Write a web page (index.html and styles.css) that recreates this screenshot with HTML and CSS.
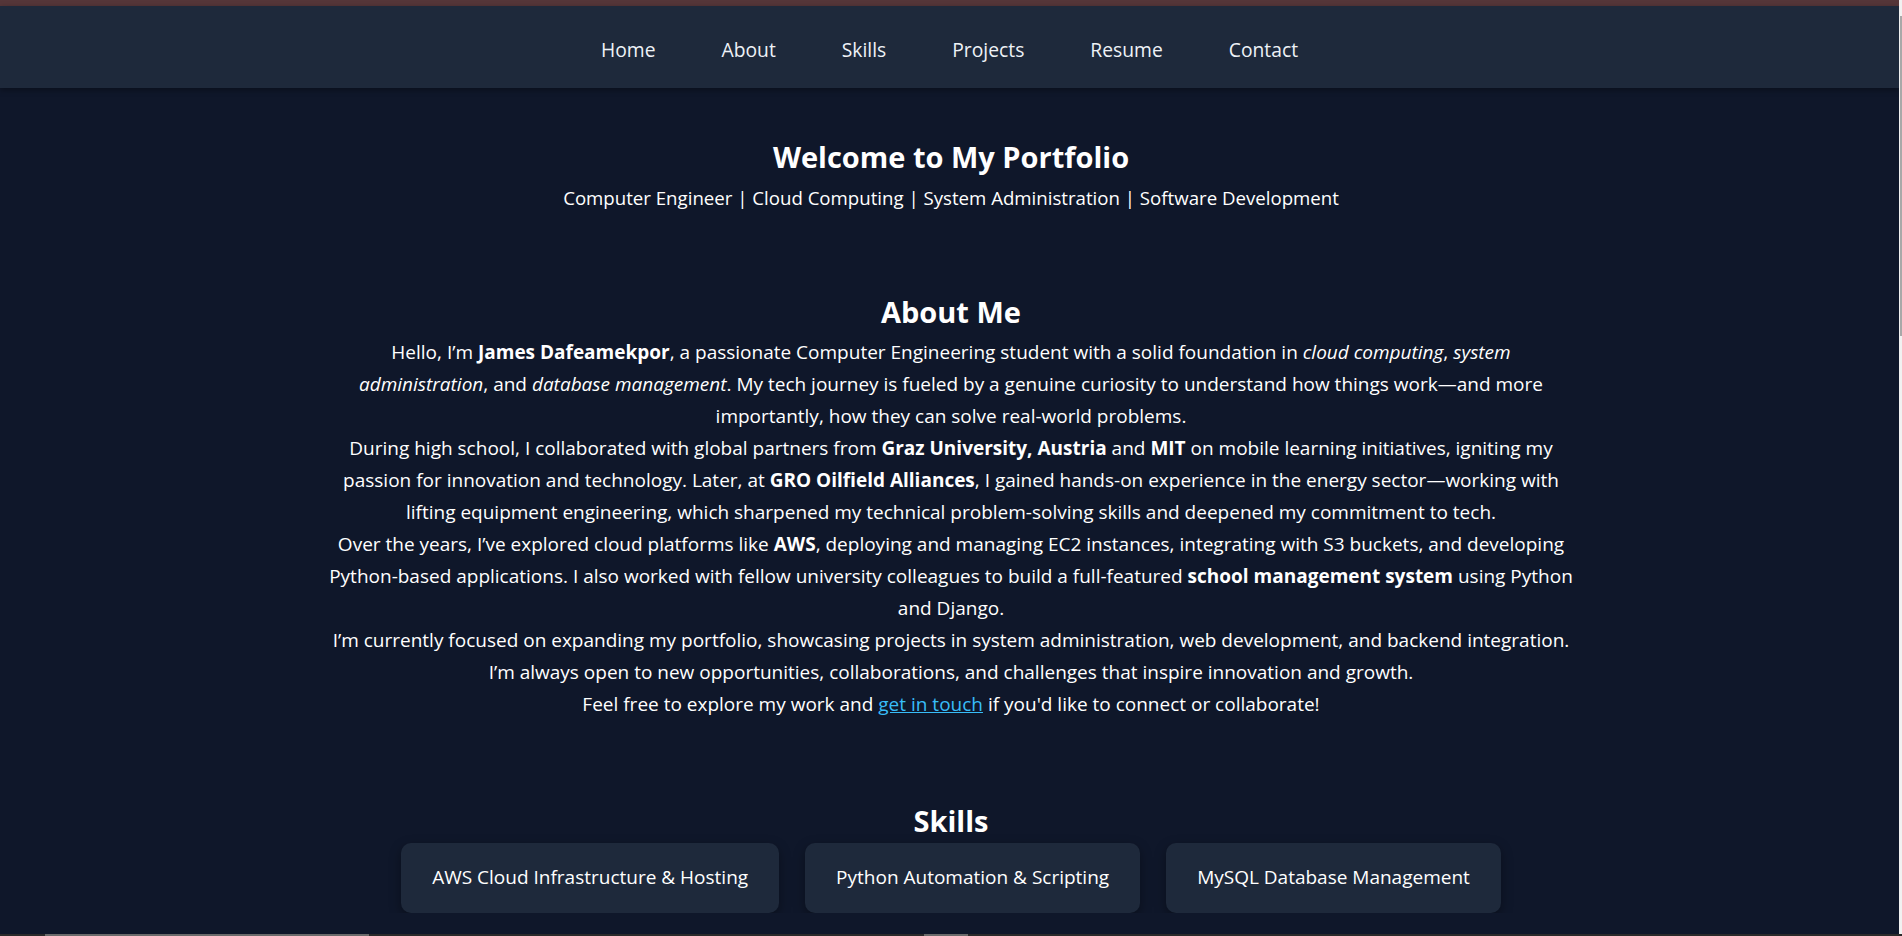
FILE: index.html
```html
<!DOCTYPE html>
<html lang="en">
<head>
<meta charset="utf-8">
<title>James Dafeamekpor | Portfolio</title>
<link rel="stylesheet" href="styles.css">
</head>
<body>
<div class="top-strip"></div>
<nav class="navbar">
  <a href="#home" class="nav-link">Home</a>
  <a href="#about" class="nav-link">About</a>
  <a href="#skills" class="nav-link">Skills</a>
  <a href="#projects" class="nav-link">Projects</a>
  <a href="#resume" class="nav-link">Resume</a>
  <a href="#contact" class="nav-link">Contact</a>
</nav>
<main>
  <header class="hero" id="home">
    <h1 class="hero-title">Welcome to My Portfolio</h1>
    <p class="hero-sub">Computer Engineer | Cloud Computing | System Administration | Software Development</p>
  </header>
  <section class="about" id="about">
    <h2 class="section-title">About Me</h2>
    <div class="about-text">
      <p>Hello, I’m <strong>James Dafeamekpor</strong>, a passionate Computer Engineering student with a solid foundation in <em>cloud computing</em>, <em>system administration</em>, and <em>database management</em>. My tech journey is fueled by a genuine curiosity to understand how things work—and more importantly, how they can solve real-world problems.</p>
      <p>During high school, I collaborated with global partners from <strong>Graz University, Austria</strong> and <strong>MIT</strong> on mobile learning initiatives, igniting my passion for innovation and technology. Later, at <strong>GRO Oilfield Alliances</strong>, I gained hands-on experience in the energy sector—working with lifting equipment engineering, which sharpened my technical problem-solving skills and deepened my commitment to tech.</p>
      <p>Over the years, I’ve explored cloud platforms like <strong>AWS</strong>, deploying and managing EC2 instances, integrating with S3 buckets, and developing Python-based applications. I also worked with fellow university colleagues to build a full-featured <strong>school management system</strong> using Python and Django.</p>
      <p>I’m currently focused on expanding my portfolio, showcasing projects in system administration, web development, and backend integration. I’m always open to new opportunities, collaborations, and challenges that inspire innovation and growth.</p>
      <p>Feel free to explore my work and <a href="#contact" class="inline-link">get in touch</a> if you'd like to connect or collaborate!</p>
    </div>
  </section>
  <section class="skills" id="skills">
    <h2 class="section-title">Skills</h2>
    <div class="skill-list">
      <div class="skill-card">AWS Cloud Infrastructure &amp; Hosting</div>
      <div class="skill-card">Python Automation &amp; Scripting</div>
      <div class="skill-card">MySQL Database Management</div>
    </div>
  </section>
</main>
<div class="scroll-v"><div class="scroll-v-thumb"></div></div>
<div class="scroll-h"><div class="scroll-h-thumb"></div><div class="scroll-h-thumb2"></div></div>
</body>
</html>
```
FILE: styles.css
```css
* { box-sizing: border-box; }
html, body { margin: 0; padding: 0; }
body {
  background: #0f172a;
  color: #ffffff;
  font-family: "Open Sans", "Noto Sans", sans-serif;
  font-size: 19px;
  overflow: hidden;
}
.top-strip {
  height: 6px;
  background: #553639;
}
.navbar {
  height: 82px;
  padding-top: 5px;
  background: #1e293b;
  display: flex;
  justify-content: center;
  align-items: center;
  gap: 66px;
  box-shadow: 0 2px 6px rgba(0, 0, 0, 0.35);
  margin-right: 3px;
  position: relative;
}
.nav-link {
  color: #eef2f7;
  text-decoration: none;
  font-size: 19.3px;
  line-height: 24px;
}
main { text-align: center; }
.hero { padding-top: 51px; }
.hero-title {
  margin: 0;
  font-size: 29px;
  font-weight: 700;
  line-height: 36px;
}
.hero-sub {
  margin: 9px 0 0;
  font-size: 18.65px;
  line-height: 27px;
}
.about { margin-top: 83px; }
.section-title {
  margin: 0;
  font-size: 29px;
  font-weight: 700;
  line-height: 36px;
}
.about-text {
  max-width: 1250px;
  margin: 6px auto 0;
  line-height: 32px;
}
.about-text p { margin: 0; }
.about-text strong { font-weight: 700; }
.inline-link { color: #38bdf8; }
.skills { margin-top: 83px; }
.skill-list {
  display: flex;
  justify-content: center;
  gap: 26px;
  margin-top: 4px;
}
.skill-card {
  background: #1e293b;
  border-radius: 10px;
  padding: 21px 31px 22px;
  line-height: 27px;
  box-shadow: 0 4px 12px rgba(0, 0, 0, 0.35);
}
.scroll-v {
  position: fixed;
  top: 0;
  right: 0;
  width: 3px;
  height: 100%;
  background: #f1f1f1;
}
.scroll-v-thumb {
  margin-top: 16px;
  width: 2px;
  margin-left: 1px;
  height: 320px;
  background: #a8a8a8;
}
.scroll-h {
  position: fixed;
  left: 0;
  bottom: 0;
  width: 100%;
  height: 2px;
  background: #2a2a2a;
}
.scroll-h-thumb {
  position: absolute;
  left: 45px;
  width: 324px;
  height: 2px;
  background: #6b6b6b;
}
.scroll-h-thumb2 {
  position: absolute;
  left: 924px;
  width: 44px;
  height: 2px;
  background: #6b6b6b;
}
```
